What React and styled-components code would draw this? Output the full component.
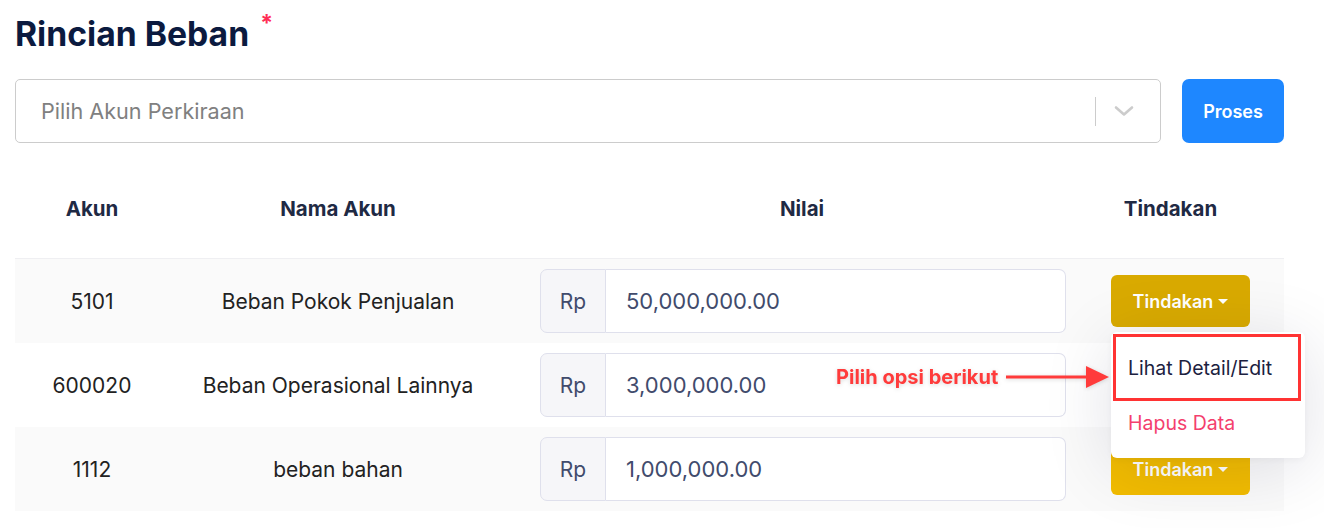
import React from "react";
import styled, { createGlobalStyle } from "styled-components";

const Global = createGlobalStyle`
  html, body { margin: 0; padding: 0; background: #fff; }
  body { font-family: Inter, "Noto Sans", "Liberation Sans", sans-serif; }
  * { box-sizing: border-box; }
`;

const Page = styled.div`
  width: 1324px;
  height: 528px;
  padding: 12px 40px 0 15px;
  overflow: hidden;
`;

const Title = styled.h1`
  margin: 0;
  font-size: 33.7px;
  font-weight: 700;
  color: #0b1a3f;
  line-height: 44px;
  display: flex;
  align-items: flex-start;
  gap: 11px;
`;

const Star = styled.span`
  color: #ff2d55;
  font-size: 23px;
  line-height: 22px;
  margin-top: 0;
`;

const FormRow = styled.div`
  margin-top: 23px;
  display: flex;
  gap: 21px;
`;

const Select = styled.div`
  flex: 1;
  height: 64px;
  border: 1px solid #cccccc;
  border-radius: 5px;
  display: flex;
  align-items: center;
  padding-right: 9px;
`;

const Placeholder = styled.div`
  flex: 1;
  padding-left: 25px;
  font-size: 21.6px;
  color: #808080;
`;

const Separator = styled.span`
  width: 1px;
  height: 29px;
  background: #cccccc;
`;

const Indicator = styled.div`
  width: 55px;
  display: flex;
  align-items: center;
  justify-content: center;
  color: #cccccc;
`;

const PrimaryButton = styled.button`
  width: 102px;
  height: 64px;
  border: none;
  border-radius: 7px;
  background: #1e87ff;
  color: #fff;
  font-family: inherit;
  font-size: 18px;
  font-weight: 600;
`;

const Table = styled.div`
  position: relative;
  margin-top: 16px;
  width: 1269px;
`;

const Row = styled.div`
  display: grid;
  grid-template-columns: 154px 338px 590px 187px;
  height: ${(p) => (p.$head ? "100px" : "84px")};
  background: ${(p) => (p.$striped ? "#fafafa" : "#fff")};
  border-bottom: ${(p) => (p.$head ? "1px solid #efeff2" : "none")};
`;

const HeadCell = styled.div`
  display: flex;
  align-items: center;
  justify-content: center;
  font-size: 20.5px;
  font-weight: 700;
  color: #1f2a44;
  padding-right: ${(p) => p.$pr || 0}px;
`;

const Cell = styled.div`
  position: relative;
  display: flex;
  align-items: center;
  justify-content: ${(p) => p.$justify || "center"};
  font-size: 21px;
  color: #222;
  padding: ${(p) => p.$pad || "0"};
`;

const InputGroup = styled.div`
  display: flex;
  width: 100%;
  height: 64px;
`;

const Addon = styled.div`
  width: 66px;
  display: flex;
  align-items: center;
  justify-content: center;
  background: #f6f6f9;
  border: 1px solid #dfe0ec;
  border-radius: 7px 0 0 7px;
  font-size: 21px;
  color: #414b6c;
`;

const Input = styled.div`
  flex: 1;
  display: flex;
  align-items: center;
  padding-left: 20px;
  background: #fff;
  border: 1px solid #dfe0ec;
  border-left: none;
  border-radius: 0 7px 7px 0;
  font-size: 22px;
  color: #414b6c;
`;

const ActionButton = styled.button`
  height: 52px;
  width: 139px;
  border: none;
  border-radius: 6px;
  background: ${(p) => (p.$active ? "#d9aa00" : "#f2bc00")};
  color: #fff;
  font-family: inherit;
  font-size: 18px;
  font-weight: 600;
  display: flex;
  align-items: center;
  justify-content: center;
  gap: 5px;
  visibility: ${(p) => (p.$covered ? "hidden" : "visible")};
`;

const Caret = styled.span`
  width: 0;
  height: 0;
  border-left: 5px solid transparent;
  border-right: 5px solid transparent;
  border-top: 5.5px solid #fff;
`;

const Menu = styled.div`
  position: absolute;
  top: 73px;
  left: 14px;
  width: 194px;
  padding: 8px 0;
  background: #fff;
  border-radius: 6px;
  box-shadow: 0 10px 70px rgba(20, 20, 60, 0.12), 0 2px 6px rgba(20, 20, 50, 0.04);
  z-index: 5;
`;

const MenuItem = styled.div`
  height: 55px;
  display: flex;
  align-items: center;
  padding-left: 17px;
  font-size: 19.5px;
  color: ${(p) => (p.$danger ? "#f43f6e" : "#1c2140")};
`;

const Highlight = styled.div`
  position: absolute;
  top: 2px;
  left: 2px;
  width: 188px;
  height: 67px;
  border: 3px solid #ff3333;
  pointer-events: none;
`;

const Annotation = styled.div`
  position: absolute;
  top: 205px;
  left: 821px;
  display: flex;
  align-items: center;
  gap: 8px;
  z-index: 6;
  filter: drop-shadow(0 1px 2px rgba(0, 0, 0, 0.15));
`;

const AnnotationText = styled.span`
  font-size: 20px;
  font-weight: 700;
  color: #ff3b3b;
`;

const rows = [
  { akun: "5101", nama: "Beban Pokok Penjualan", nilai: "50,000,000.00" },
  { akun: "600020", nama: "Beban Operasional Lainnya", nilai: "3,000,000.00" },
  { akun: "1112", nama: "beban bahan", nilai: "1,000,000.00" },
];

export default function App() {
  return (
    <Page>
      <Global />
      <Title>
        Rincian Beban <Star>*</Star>
      </Title>
      <FormRow>
        <Select>
          <Placeholder>Pilih Akun Perkiraan</Placeholder>
          <Separator />
          <Indicator>
            <svg width="20" height="20" viewBox="0 0 20 20">
              <path
                d="M2 6.5 L10 13.5 L18 6.5"
                fill="none"
                stroke="currentColor"
                strokeWidth="2.6"
                strokeLinecap="round"
                strokeLinejoin="round"
              />
            </svg>
          </Indicator>
        </Select>
        <PrimaryButton>Proses</PrimaryButton>
      </FormRow>

      <Table>
        <Row $head>
          <HeadCell>Akun</HeadCell>
          <HeadCell>Nama Akun</HeadCell>
          <HeadCell>Nilai</HeadCell>
          <HeadCell $pr={40}>Tindakan</HeadCell>
        </Row>
        {rows.map((r, i) => (
          <Row key={r.akun} $striped={i % 2 === 0}>
            <Cell>{r.akun}</Cell>
            <Cell>{r.nama}</Cell>
            <Cell $pad="0 31px 0 33px">
              <InputGroup>
                <Addon>Rp</Addon>
                <Input>{r.nilai}</Input>
              </InputGroup>
            </Cell>
            <Cell $justify="flex-start" $pad="0 0 0 14px">
              <ActionButton $active={i === 0} $covered={i === 1}>
                Tindakan <Caret />
              </ActionButton>
              {i === 0 && (
                <Menu>
                  <MenuItem>Lihat Detail/Edit</MenuItem>
                  <MenuItem $danger>Hapus Data</MenuItem>
                  <Highlight />
                </Menu>
              )}
            </Cell>
          </Row>
        ))}
        <Annotation>
          <AnnotationText>Pilih opsi berikut</AnnotationText>
          <svg width="104" height="26" viewBox="0 0 104 26">
            <rect x="0" y="11.5" width="82" height="3" fill="#ff3b3b" />
            <path d="M80 2 L103 13 L80 24 Z" fill="#ff3b3b" />
          </svg>
        </Annotation>
      </Table>
    </Page>
  );
}
